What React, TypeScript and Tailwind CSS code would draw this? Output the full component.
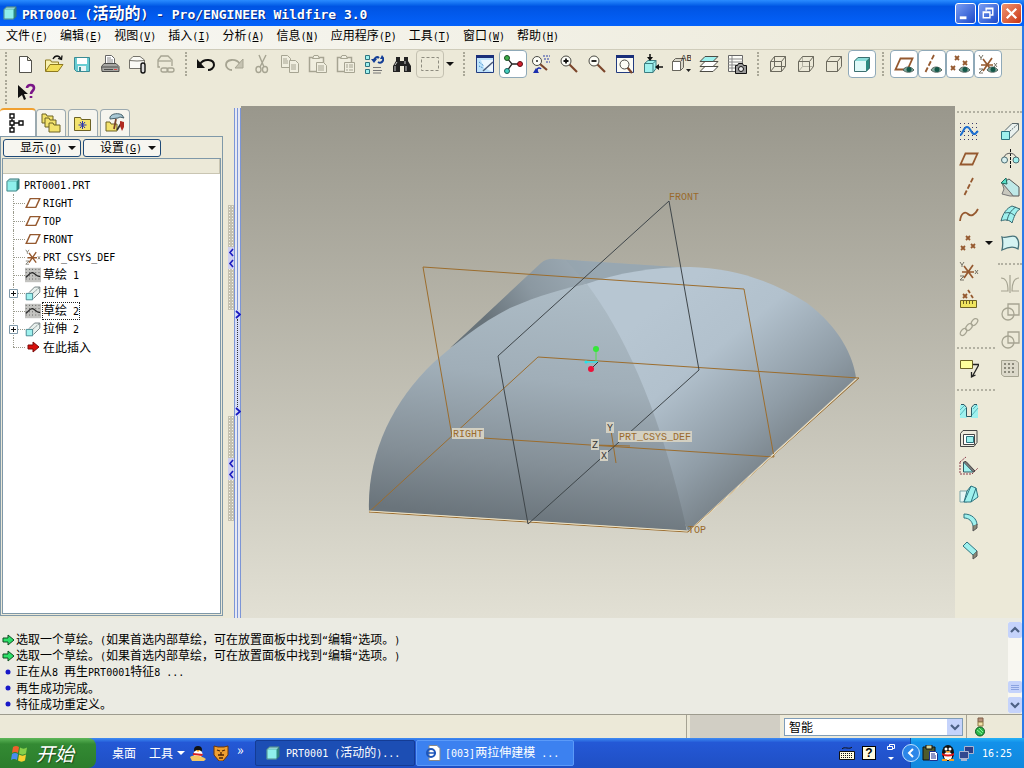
import type { ReactNode } from "react";
import { useState } from "react";

const OR = "#95592f";
const GY = "#a6a492";
const AQ = "#9ff1ee";

/* Splits mixed text so that latin runs take exactly half of a CJK cell */
const Txt = ({ s, big }: { s: string; big?: boolean }) => (
  <span className="whitespace-pre">
    {s.split(/([\x20-\x7e“”]+)/).map((part, i) =>
      /^[\x20-\x7e“”]/.test(part) ? (
        <span
          key={i}
          className={
            big
              ? "font-['DejaVu_Sans_Mono',monospace] text-[13px]"
              : "font-['DejaVu_Sans_Mono',monospace] text-[10px]"
          }
        >
          {part}
        </span>
      ) : (
        part
      ),
    )}
  </span>
);

/* "文件" + "F" => 文件(F) with the access key underlined */
const Hot = ({ label, k }: { label: string; k: string }) => (
  <span className="whitespace-pre">
    {label}
    <span className="font-['DejaVu_Sans_Mono',monospace] text-[10px]">
      (<u className="underline-offset-1">{k}</u>)
    </span>
  </span>
);

const cube = (
  <>
    <path d="M1 5 5 1h14v14l-4 4H1z" fill="#2c8b84" />
    <path d="M1 5 5 1h14l-4 4z" fill="#8fd5d2" />
    <path d="M1 5h14v14H1z" fill="#8ff0ec" />
    <path d="M1.500 5 5 1.500h13.500V15L15 18.500H1.500z" fill="none" stroke="#426b73" />
  </>
);

const wire = (
  <path d="M2.5 7.5h11v10h-11zM2.5 7.5l4-5h11v10l-4 5M13.5 7.5l4-5" />
);

const eye = (
  <>
    <path d="M9 16c2-4 8-4 11 0-3 3-8 3-11 0z" fill="#7fa89c" stroke="#55645e" />
    <circle cx="15" cy="15.500" r="2.500" fill="#15584a" />
  </>
);

const plane = <path d="M6.500 4.500h12l-5 11h-12z" fill="none" stroke={OR} strokeWidth="1.800" />;

const xMark = (x: number, y: number, c = OR) => (
  <path d={`M${x - 2} ${y - 2}l4 4m0-4l-4 4`} stroke={c} strokeWidth="1.800" fill="none" />
);

const csys = (
  <g fill="none">
    <path d="M3 11h12M5 5l9 12M14 4 5 17" stroke={OR} strokeWidth="1.700" />
    <path d="M1 1l2 3 2-3M3 4v2M16 9l3 4m0-4-3 4M1 15h4l-4 4h4" stroke="#747164" />
  </g>
);

const lens = (x: number, y: number) => (
  <>
    <path d={`M${x + 3} ${y + 3}l8 8`} stroke="#7b452b" strokeWidth="2.200" />
    <circle cx={x} cy={y} r="5" fill="#fdfdf6" stroke="#4a4a44" />
  </>
);

const folder = (x: number, y: number) => (
  <path d={`M${x} ${y}h4l1 2h6v7H${x}z`} fill="#f3e36d" stroke="#6d6224" />
);

const icons: Record<string, ReactNode> = {
  cube,
  create: <path d="M3.500 2.500h8l4 4v12h-12zM11.500 2.500v4h4" fill="#fff" stroke="#54534c" />,
  open: (
    <>
      <path d="M1.500 17V6h5l1 2h7v3" fill="#f8f1b0" stroke="#8e7a20" />
      <path d="M1.500 17.500 6 10.500h13l-5 7z" fill="#f1dd58" stroke="#8e7a20" />
      <path d="M9 5c2-4 6-4 8 0M14 4.500l3.500 1 .5-4" fill="none" stroke="#111" strokeWidth="1.300" />
    </>
  ),
  save: (
    <>
      <path d="M2.500 3.500h15v14h-13l-2-2z" fill="#69cdd3" stroke="#3b8b94" />
      <path d="M5 4h10v6H5z" fill="#fff" />
      <path d="M6 12h8v5H6z" fill="#e9f5f5" />
      <path d="M7 13h2v4H7z" fill="#3b8b94" />
    </>
  ),
  print: (
    <>
      <path d="M5.500 10V1.500h6l3 3V10z" fill="#fff" stroke="#666" />
      <path d="M7 4h4M7 6h6M7 8h6" stroke="#888" />
      <path d="M1.500 12.500 4 9.500h12l3 3v5h-17z" fill="#a6a6a2" stroke="#4d4d4a" />
      <path d="M2 13h16M4 15.500h9" stroke="#4d4d4a" />
      <path d="M14 15h3v1h-3z" fill="#d44" />
    </>
  ),
  mail: (
    <>
      <path d="M1.500 14.500V6L5 2.500h7L16.500 6v8.500z" fill="#fafaf5" stroke="#74726a" />
      <path d="M1.500 6.500 9 7l7.500-.5" fill="none" stroke="#74726a" />
      <rect x="13" y="9" width="4" height="10" rx="2" fill="#ddd" stroke="#111" strokeWidth="1.400" />
    </>
  ),
  weblink: (
    <g fill="none" stroke={GY} strokeWidth="1.300">
      <path d="M4 13H2V6l3-4h7l4 4v6" />
      <path d="M2 7h13" />
      <rect x="5" y="14" width="7" height="4" rx="2" />
      <rect x="11" y="14" width="7" height="4" rx="2" />
    </g>
  ),
  undo: (
    <>
      <path d="M4 10c4-6 14-5 14 1 0 3-3 5-6 5" fill="none" stroke="#111" strokeWidth="2" />
      <path d="M1 5v9h8z" fill="#111" />
    </>
  ),
  redo: (
    <>
      <path d="M16 10C12 4 2 5 2 11c0 3 3 5 6 5" fill="none" stroke={GY} strokeWidth="1.800" />
      <path d="M19 5v9h-8z" fill="#c6c3b2" stroke={GY} />
    </>
  ),
  cut: (
    <g fill="none" stroke={GY} strokeWidth="1.400">
      <path d="M7 1l5 12M14 1 8 13" />
      <ellipse cx="6.500" cy="15.500" rx="2.500" ry="3" />
      <ellipse cx="13" cy="15.500" rx="2.500" ry="3" />
    </g>
  ),
  copy: (
    <g fill="#f0eedf" stroke={GY}>
      <path d="M1.500 1.500h6l3 3v9h-9zM3 5h4M3 7h5M3 9h5" />
      <path d="M9.500 6.500h6l3 3v9h-9zM11 11h5M11 13h5M11 15h5" />
    </g>
  ),
  paste: (
    <g fill="#f0eedf" stroke={GY}>
      <path d="M1.500 3.500h14v14h-14z" strokeWidth="1.500" />
      <path d="M4.500 4.500 6 1.500h4l1.500 3z" />
      <path d="M8.500 8.500h7l3 3v7h-10zM10 12h6M10 14h6M10 16h6" />
    </g>
  ),
  pasteSpecial: (
    <g fill="#f0eedf" stroke={GY}>
      <path d="M1.500 3.500h14v14h-14z" strokeWidth="1.500" />
      <path d="M4.500 4.500 6 1.500h4l1.500 3z" />
      <path d="M8.500 8.500h10v10h-10zM10 11h2M13 11h4M10 13h2M13 13h4M10 16h2M13 16h4" />
    </g>
  ),
  regen: (
    <>
      <g fill={AQ} stroke="#2e7480">
        <path d="M1.500 1.500h4v4h-4zM1.500 8.500h4v4h-4zM1.500 15.500h4v4h-4z" />
      </g>
      <path d="M10 7c0-3 3-5 5-3M19 4c1 3-2 6-5 4" fill="none" stroke="#143e96" strokeWidth="2" />
      <path d="M7 5h6l-3 4zM16 5h5l-3-4z" fill="#143e96" />
      <path d="M9 13.500h8M9 16.500h9M9 19h8" stroke="#777" />
    </>
  ),
  find: (
    <>
      <path d="M4 3h4v4h4V3h4v4l3 5v6h-7v-6H8v6H1v-6l3-5z" fill="#222" />
      <path d="M3 12v5M5 8l-2 3M14 12v5M13 7v3" stroke="#c9c9c9" />
    </>
  ),
  marquee: (
    <path d="M1.500 3.500h17v13h-17z" fill="none" stroke="#8d8b7f" strokeDasharray="3 2" />
  ),
  repaint: (
    <>
      <path d="M1.500 2.500h17v16h-17z" fill="#bfe3fb" stroke="#223b80" />
      <path d="M1 1h18v3H1z" fill="#1a2f7a" />
      <path d="M6 6h12v12L9 14z" fill="#eef8ff" />
      <path d="M18 8 8 17" stroke="#4d5b78" strokeWidth="1.500" />
      <path d="M4 8l5 4M4 12l4 2" stroke="#2b7fc0" strokeDasharray="1 1" />
    </>
  ),
  spin: (
    <>
      <path d="M4 4l5 6-5 7M9 10h8" fill="none" stroke="#222" strokeWidth="1.300" />
      <circle cx="4" cy="4" r="2.500" fill="#3fae4a" stroke="#1b4d22" />
      <circle cx="4" cy="17" r="2.500" fill="#46d0c0" stroke="#1b5d58" />
      <circle cx="17" cy="10" r="2.500" fill="#d3202e" stroke="#5c0d14" />
    </>
  ),
  orient: (
    <>
      <path d="M9 10l7 6" stroke="#7b452b" strokeWidth="2.200" />
      <circle cx="6" cy="7" r="4.500" fill="#fdfdf6" stroke="#4a4a44" />
      <circle cx="6" cy="7" r="1" fill="#222" />
      <path d="M12 2h7M13 5h6M15 8h4" stroke="#2b3fa8" strokeDasharray="2 1" />
      <path d="M6 19v-3c0-2 3-3 4-1" fill="none" stroke="#1b2fae" strokeWidth="1.500" />
      <path d="M5 14l-3 5h6z" fill="#1b2fae" />
    </>
  ),
  zoomIn: (
    <>
      {lens(7, 7)}
      <path d="M4.500 7h5M7 4.500v5" stroke="#111" strokeWidth="1.800" />
    </>
  ),
  zoomOut: (
    <>
      {lens(7, 7)}
      <path d="M4.500 7h5" stroke="#111" strokeWidth="1.800" />
    </>
  ),
  refit: (
    <>
      <path d="M1.500 2.500h17v16h-17z" fill="#fbfbf4" stroke="#223b80" />
      <path d="M1 1h18v3H1z" fill="#1a2f7a" />
      <path d="M12 13l5 6" stroke="#7b452b" strokeWidth="2.200" />
      <circle cx="9.500" cy="10.500" r="4.500" fill="#fdfdf6" stroke="#4a4a44" />
    </>
  ),
  reorient: (
    <>
      <path d="M1.500 9.500 5 6.500h8v8l-3 4H1.500z" fill={AQ} stroke="#3c7c80" />
      <path d="M1.500 9.500H10v9M10 9.500l3-3" fill="none" stroke="#3c7c80" />
      <path d="M7 0v5M20 13h-5" stroke="#111" strokeWidth="1.500" />
      <path d="M4 3h6L7 7zM16 10v6l-4-3z" fill="#111" />
    </>
  ),
  views: (
    <>
      <path d="M1.500 7.500l3-3h8v9l-3 3h-8z" fill="#d9d7ca" stroke="#67655c" />
      <path d="M1.500 7.500h8v9h-8z" fill="#fff" stroke="#67655c" />
      <text x="10" y="7" fontSize="9" fontFamily="Liberation Mono, monospace" fill="#222">AB</text>
      <path d="M15 15h5l-2.500 3z" fill="#222" />
    </>
  ),
  layers: (
    <g stroke="#4c4b44">
      <path d="M1 17.500 6 12.500h13l-5 5z" fill="#fff" />
      <path d="M1 12.500 6 7.500h13l-5 5z" fill="#fff" />
      <path d="M1 7.500 6 2.500h13l-5 5z" fill={AQ} />
    </g>
  ),
  viewMgr: (
    <>
      <path d="M1.500 1.500h14v16h-14z" fill="#fdfdf8" stroke="#666" />
      <path d="M1 5h15M1 8h15M1 11h15M1 14h15M5 2v15" stroke="#888" />
      <path d="M8.500 11.500h2l1-2h4l1 2h3v8h-11z" fill="#999" stroke="#111" />
      <circle cx="14" cy="15" r="2.500" fill="#eee" stroke="#111" />
    </>
  ),
  wireframe: (
    <g fill="none" stroke="#6b695d">
      {wire}
      <path d="M6.500 2.500v10h11M6.500 12.500l-4 5" />
    </g>
  ),
  hidden: (
    <>
      <path d="M6.500 2.500v10h11M6.500 12.500l-4 5" fill="none" stroke="#b3b1a2" />
      <g fill="none" stroke="#6b695d">{wire}</g>
    </>
  ),
  noHidden: <g fill="none" stroke="#6b695d">{wire}</g>,
  shaded: (
    <>
      <path d="M2 7l4-4h12l-4 4z" fill="#8adcd9" />
      <path d="M2 7h12v11H2z" fill="#dff9f8" />
      <path d="M14 7l4-4v11l-4 4z" fill="#2b8a80" />
      <path d="M2.500 7 6 3.500h11.500V14L14 17.500H2.500z" fill="none" stroke="#3d6f70" />
    </>
  ),
  dPlane: <>{plane}{eye}</>,
  dAxis: (
    <>
      <path d="M12 1 3 19" stroke={OR} strokeWidth="1.800" strokeDasharray="5 2" />
      {eye}
    </>
  ),
  dPoint: <>{xMark(7, 4)}{xMark(15, 9)}{xMark(3, 14)}{eye}</>,
  dCsys: <>{csys}{eye}</>,
  help: (
    <>
      <path d="M2 3v13l4-3 2 5 2-1-2-5h4z" fill="#111" />
      <path d="M11 6c0-4 7-4 7 0 0 3-3 3-3 6M15 14v2" fill="none" stroke="#7a1688" strokeWidth="2.600" />
    </>
  ),
  tabTree: (
    <g fill="#fff" stroke="#111" strokeWidth="1.400">
      <path d="M4 6v9M6 10h6" />
      <path d="M2 1h4v4H2zM2 8h4v4H2zM2 15h4v4H2zM11 8h4v4h-4z" />
    </g>
  ),
  tabFolders: <>{folder(1, 1)}{folder(4, 5)}{folder(8, 10)}</>,
  tabFav: (
    <>
      <path d="M1.500 4.500h6l1 2h9v11h-16z" fill="#f3e36d" stroke="#6d6224" />
      <path d="M9.500 8v8M5.500 12h8M7 9l5 6M12 9l-5 6" stroke="#2a37b0" />
    </>
  ),
  tabTools: (
    <>
      {folder(1, 9)}
      <path d="M5 4c2-4 9-4 12-2l2 3-4-1-2 1-8 1z" fill="#a9c8d4" stroke="#46606a" />
      <path d="M11 6 9 16" stroke="#7b452b" strokeWidth="1.800" />
      <path d="M12 17l5-8" stroke="#333" strokeWidth="1.800" />
      <path d="M15 8l4 1v5l-2 4-2-5z" fill="#b02a20" />
    </>
  ),
  plane,
  csys,
  sketchRow: (
    <>
      <path d="M0 1h20v18H0z" fill="#c3c3c0" />
      <path d="M1 3h18M1 7h18M1 11h18M1 15h18" stroke="#333" strokeDasharray="1 3" />
      <path d="M1 13c3-1 4-6 8-6s4 5 10 5" fill="none" stroke="#222" strokeWidth="1.500" />
    </>
  ),
  extrude: (
    <>
      <path d="M5 9.500 12 2.500h6.500V9l-8 8" fill="#e9f1ee" stroke="#59676a" />
      <path d="M1.500 10.500h8v8h-8z" fill={AQ} stroke="#2e7480" />
      <path d="M9.500 10.500 18 3" stroke="#59676a" strokeDasharray="2 1" />
    </>
  ),
  sketch: (
    <>
      <g stroke="#3a3a6a" strokeDasharray="1 3">
        <path d="M1 2.500h18M1 6.500h18M1 10.500h18M1 14.500h18M1 18.500h18" />
      </g>
      <path d="M1 14C4 14 4 6 8 6s4 8 8 7l3-3" fill="none" stroke="#1d6fd0" strokeWidth="2" />
    </>
  ),
  axis: <path d="M14 1 5 19" stroke={OR} strokeWidth="1.800" strokeDasharray="5 2" />,
  curve: <path d="M1 16C2 8 6 6 9 9s7 1 10-5" fill="none" stroke={OR} strokeWidth="1.800" />,
  points: <>{xMark(9, 5)}{xMark(4, 15)}{xMark(14, 13)}</>,
  refs: (
    <>
      {xMark(6, 7)}
      <path d="M9 1l2 3M12 6l2 3" stroke={OR} strokeWidth="1.800" />
      <path d="M1.500 11.500h16v7h-16z" fill="#efe45e" stroke="#6d6224" />
      <path d="M4.500 12v3M7.500 12v3M10.500 12v3M13.500 12v3" stroke="#6d6224" />
    </>
  ),
  chain: (
    <g fill="none" stroke={GY} strokeWidth="1.300">
      <ellipse cx="4.500" cy="15" rx="2.500" ry="4" transform="rotate(40 4.500 15)" />
      <ellipse cx="10" cy="10" rx="2.500" ry="4" transform="rotate(40 10 10)" />
      <ellipse cx="15.500" cy="5" rx="2.500" ry="4" transform="rotate(40 15.500 5)" />
    </g>
  ),
  annot: (
    <>
      <path d="M1.500 1.500h12v8h-12z" fill="#ffff9c" stroke="#6d6224" />
      <path d="M14 5.500h6L13 18M12.500 13v5l4-2" fill="none" stroke="#222" strokeWidth="1.300" />
    </>
  ),
  hole: (
    <>
      <path d="M1 5h4l3 4v9H1zM19 5h-4l-3 4v9h7z" fill={AQ} />
      <path d="M1 10l5-5M1 15l6-7M13 15l6-7M14 9l4-4" stroke="#5ab8bd" />
      <path d="M2 4.500h3l2.500 3v9h5v-9l2.500-3h3" fill="none" stroke="#2c5a66" />
    </>
  ),
  shell: (
    <g stroke="#444">
      <path d="M1.500 5.500 4 2.500h14v12l-3 4H1.500z" fill="#eeeadd" />
      <path d="M4.500 6.500h11v10h-11z" fill="#fff" />
      <path d="M7.500 8.500h7v6h-7z" fill={AQ} stroke="#2e7480" />
    </g>
  ),
  rib: (
    <>
      <path d="M1 6l6-5M1 6v12h12l6-6" fill="none" stroke="#8b3a4a" strokeDasharray="2 1" />
      <path d="M4.500 6v10H14z" fill={AQ} stroke="#2c5a66" />
      <path d="M4.500 6 7 5.500 16 15l-2 1" fill="#777" stroke="#444" />
    </>
  ),
  draft: (
    <>
      <path d="M1 7h7v11H1z" fill="#e6f6f5" stroke="#7aa3a8" />
      <path d="M8 7l4-5 5 2 2 9-7 5H5z" fill={AQ} stroke="#2e7480" />
      <path d="M5 18 12 2M12 18l5-14" fill="none" stroke="#2e7480" />
    </>
  ),
  round: (
    <>
      <path d="M5 2c8 0 13 5 13 11l-4 1C13 9 10 6 5 6z" fill={AQ} stroke="#2e7480" />
      <path d="M14 14v5l4-3v-4" fill="#8a8877" stroke="#555" />
    </>
  ),
  chamfer: (
    <>
      <path d="M4 6l4-4 10 9-4 4z" fill={AQ} stroke="#2e7480" />
      <path d="M14 15v4l4-3v-5" fill="#8a8877" stroke="#555" />
    </>
  ),
  revolve: (
    <>
      <path d="M10.500 0v20" stroke="#111" strokeDasharray="3 1" />
      <path d="M4 8c2-5 10-5 12 0" fill="none" stroke="#555" />
      <circle cx="4.500" cy="11" r="3" fill="#d6eeee" stroke="#4a6a70" />
      <circle cx="16" cy="11" r="3" fill={AQ} stroke="#4a6a70" />
    </>
  ),
  sweep: (
    <>
      <path d="M2 6l7-4 10 8v9h-6z" fill="#bfe9e8" stroke="#555" />
      <path d="M2 6l8 9 3 4h-3l-8-2 2-5z" fill="#c9c8be" stroke="#777" />
      <path d="M1 6l5-5 1 6z" fill="#57e0c8" stroke="#1d6b60" />
    </>
  ),
  boundary: (
    <>
      <path d="M1 16C3 8 7 3 12 1l8 3c-4 2-6 8-8 14-2-3-7-4-11-2z" fill={AQ} stroke="#38686f" />
      <path d="M5 8c4-1 7 0 10 3M7 16c1-6 4-11 9-14" fill="none" stroke="#38686f" />
    </>
  ),
  style: (
    <path d="M2 4c5 2 10-3 14 0 3 3 3 8 2 12-4-3-10-2-16 1 1-5 1-9 0-13z" fill="#d5f3f2" stroke="#47727a" strokeWidth="1.300" />
  ),
  mirror: (
    <g fill="none" stroke={GY} strokeWidth="1.200">
      <path d="M10 1v18M1 4c5 0 7 4 7 13H1M19 4c-5 0-7 4-7 13h7" />
    </g>
  ),
  merge: (
    <g fill="none" stroke={GY} strokeWidth="1.300">
      <circle cx="8" cy="12" r="6" />
      <path d="M8 2h11v11H8z" />
    </g>
  ),
  pattern: (
    <>
      <path d="M1.500 2.500h14l3 2v14H4l-2.500-2z" fill="#dcd9ca" stroke={GY} />
      <path d="M4 6h11M4 10h11M4 14h11" stroke="#8b897b" strokeWidth="2" strokeDasharray="2 2" />
    </>
  ),
};

const Icon = ({ name, size = "size-5" }: { name: string; size?: string }) => (
  <svg viewBox="0 0 20 20" className={`${size} shrink-0`} aria-hidden="true">
    {icons[name]}
  </svg>
);

interface Tool {
  n: string;
  on?: boolean;
}

const fileTools: Tool[] = ["create", "open", "save", "print", "mail", "weblink"].map((n) => ({ n }));
const editTools: Tool[] = ["undo", "redo", "cut", "copy", "paste", "pasteSpecial", "regen", "find"].map((n) => ({ n }));
const viewTools: Tool[] = [
  { n: "repaint" }, { n: "spin", on: true }, { n: "orient" }, { n: "zoomIn" }, { n: "zoomOut" },
  { n: "refit" }, { n: "reorient" }, { n: "views" }, { n: "layers" }, { n: "viewMgr" },
];
const modelTools: Tool[] = [{ n: "wireframe" }, { n: "hidden" }, { n: "noHidden" }, { n: "shaded", on: true }];
const datumTools: Tool[] = ["dPlane", "dAxis", "dPoint", "dCsys"].map((n) => ({ n, on: true }));

const ToolGroup = ({ tools }: { tools: Tool[] }) => (
  <div className="flex">
    {tools.map((t) => (
      <button
        key={t.n}
        aria-label={t.n}
        className={
          t.on
            ? "flex h-7 w-7 items-center justify-center rounded border border-[#8fa9b8] bg-white"
            : "flex h-7 w-7 items-center justify-center"
        }
      >
        <Icon name={t.n} />
      </button>
    ))}
  </div>
);

const Grip = ({ w }: { w: string }) => (
  <div className={`flex h-7 shrink-0 items-center justify-center ${w}`}>
    <div className="h-6 w-0 border-l-2 border-dotted border-[#aaa898]" />
  </div>
);

const Dots = ({ h }: { h: string }) => (
  <div className={`flex items-center ${h}`}>
    <div className="h-0 w-full border-t-2 border-dotted border-[#b3b1a2]" />
  </div>
);

const menus = [
  ["文件", "F"], ["编辑", "E"], ["视图", "V"], ["插入", "I"], ["分析", "A"],
  ["信息", "N"], ["应用程序", "P"], ["工具", "T"], ["窗口", "W"], ["帮助", "H"],
];

const treeItems = [
  { icon: "plane", label: "RIGHT" },
  { icon: "plane", label: "TOP" },
  { icon: "plane", label: "FRONT" },
  { icon: "csys", label: "PRT_CSYS_DEF" },
  { icon: "sketchRow", label: "草绘 1" },
  { icon: "extrude", label: "拉伸 1", plus: true },
  { icon: "sketchRow", label: "草绘 2", focus: true },
  { icon: "extrude", label: "拉伸 2", plus: true },
  { icon: "insert", label: "在此插入" },
];

const messages = [
  { arrow: true, text: "选取一个草绘。(如果首选内部草绘，可在放置面板中找到“编辑“选项。)" },
  { arrow: true, text: "选取一个草绘。(如果首选内部草绘，可在放置面板中找到“编辑“选项。)" },
  { arrow: false, text: "正在从8 再生PRT0001特征8 ..." },
  { arrow: false, text: "再生成功完成。" },
  { arrow: false, text: "特征成功重定义。" },
];

const Down = ({ c = "#111" }: { c?: string }) => (
  <svg viewBox="0 0 8 4" className="h-1 w-2" aria-hidden="true">
    <path d="M0 0h8L4 4z" fill={c} />
  </svg>
);

const Chevron = ({ up }: { up?: boolean }) => (
  <svg viewBox="0 0 10 10" className="size-2.5" aria-hidden="true">
    <path d={up ? "M1 7l4-4 4 4" : "M1 3l4 4 4-4"} fill="none" stroke="#4d6185" strokeWidth="2.200" />
  </svg>
);

const TitleBar = () => (
  <header className="flex h-[26px] items-center bg-linear-to-b from-[#2a8cff] via-[#0054e3] via-25% to-[#0462fb] pl-[3px] pr-[2px]">
    <Icon name="cube" size="size-3.5" />
    <h1 className="ml-[5px] flex-1 text-[16px] font-bold leading-5 text-white [text-shadow:1px_1px_0_#0a2a80]">
      <Txt s="PRT0001 (活动的) - Pro/ENGINEER Wildfire 3.0" big />
    </h1>
    <div className="flex gap-[2px]">
      <button aria-label="最小化" className="size-[21px] rounded-[3px] border border-white bg-linear-to-br from-[#7b9df2] to-[#1c46c8]">
        <svg viewBox="0 0 20 20"><path d="M4 13h7v3H4z" fill="#fff" /></svg>
      </button>
      <button aria-label="还原" className="size-[21px] rounded-[3px] border border-white bg-linear-to-br from-[#7b9df2] to-[#1c46c8]">
        <svg viewBox="0 0 20 20" fill="none" stroke="#fff">
          <path d="M7.500 7V4.500h7v7H12M7 5h8" strokeWidth="1.500" />
          <path d="M4.500 8.500h7v6h-7zM4 9h8" strokeWidth="1.500" />
        </svg>
      </button>
      <button aria-label="关闭" className="size-[21px] rounded-[3px] border border-white bg-linear-to-br from-[#f0936f] to-[#c8320c]">
        <svg viewBox="0 0 20 20"><path d="M5 5l10 10M15 5 5 15" stroke="#fff" strokeWidth="2.400" /></svg>
      </button>
    </div>
  </header>
);

const ModelTree = () => (
  <aside className="flex w-[223px] shrink-0 flex-col pb-[2px] pt-[2px]">
    <div className="flex items-end">
      <button aria-label="模型树" className="flex h-7 w-9 items-center justify-center rounded-t border-t-2 border-r border-t-[#f0a030] border-r-[#9caab0] bg-white">
        <Icon name="tabTree" />
      </button>
      {["tabFolders", "tabFav", "tabTools"].map((t) => (
        <button key={t} aria-label={t} className="mr-[2px] flex h-[27px] w-[30px] items-center justify-center rounded-t border border-b-0 border-[#9caab0] bg-[#f6f5ee]">
          <Icon name={t} />
        </button>
      ))}
    </div>
    <div className="flex flex-1 flex-col border border-[#7f98a8] bg-[#ece9d8] p-px">
      <div className="flex gap-[2px] px-px pt-px">
        <button className="flex h-[18px] w-[78px] items-center justify-center gap-1.5 rounded-[3px] border border-[#1f4a78] bg-[#f7f6f0] pl-3">
          <Hot label="显示" k="O" />
          <Down />
        </button>
        <button className="flex h-[18px] w-[78px] items-center justify-center gap-1.5 rounded-[3px] border border-[#1f4a78] bg-[#f7f6f0] pl-3">
          <Hot label="设置" k="G" />
          <Down />
        </button>
      </div>
      <div className="mt-px flex flex-1 flex-col border border-[#7f98a8] bg-white">
        <div className="h-[15px] border-b border-r border-[#c9c5b2] bg-[#ece9d8]" />
        <div className="mt-0.5 flex h-[18px] items-center gap-1 pl-[3px]">
          <Icon name="cube" size="size-3.5" />
          <Txt s="PRT0001.PRT" />
        </div>
        <ul className="pl-1">
          {treeItems.map((it, i) => (
            <li key={i} className="flex h-[18px] items-center">
              <span className="relative flex h-full w-[18px] items-center">
                <span className={`absolute left-[6px] top-0 w-0 border-l border-dotted border-[#9a9a8c] ${i === treeItems.length - 1 ? "h-1/2" : "h-full"}`} />
                <span className="absolute left-[6px] right-0 h-0 border-t border-dotted border-[#9a9a8c]" />
                {it.plus && (
                  <svg viewBox="0 0 9 9" className="relative ml-[2px] size-[9px]" aria-hidden="true">
                    <path d="M.5.5h8v8h-8z" fill="#fff" stroke="#7f98a8" />
                    <path d="M2 4.500h5M4.500 2v5" stroke="#111" />
                  </svg>
                )}
              </span>
              {it.icon === "insert" ? (
                <svg viewBox="0 0 16 16" className="size-4" aria-hidden="true">
                  <path d="M3 6h5V3l6 5-6 5v-3H3z" fill="#d8100c" stroke="#7a0a08" />
                </svg>
              ) : (
                <Icon name={it.icon} size="size-4" />
              )}
              <span className={it.focus ? "ml-[2px] leading-[14px] outline outline-dotted outline-[#222]" : "ml-[2px] leading-[14px]"}>
                <Txt s={it.label} />
              </span>
            </li>
          ))}
        </ul>
      </div>
    </div>
  </aside>
);

const SashTexture = () => (
  <div className="flex h-[105px] w-[6px] flex-col items-center justify-center bg-[#c4c1b0] bg-[radial-gradient(#f4f2e8_1px,transparent_1px)] bg-size-[3px_3px]">
    <svg viewBox="0 0 6 22" className="h-[22px] w-[6px] bg-[#cfd0f0]" aria-hidden="true">
      <path d="M5 2 2 5.500 5 9M5 13l-3 3.500L5 20" fill="none" stroke="#1a1ac0" strokeWidth="1.600" />
    </svg>
  </div>
);

const SashArrow = () => (
  <svg viewBox="0 0 6 9" className="h-[9px] w-[6px] shrink-0" aria-hidden="true">
    <path d="M1 1l4 3.500L1 8" fill="none" stroke="#1a1ac0" strokeWidth="1.800" />
  </svg>
);

const Sash = () => (
  <div className="flex w-[18px] shrink-0 pt-0.5">
    <div className="flex flex-1 flex-col items-center justify-center gap-[106px] pl-1">
      <SashTexture />
      <SashTexture />
    </div>
    <div className="flex w-[7px] flex-col border-x border-[#7c95d6] bg-[#e6e8f2]">
      <div className="mx-auto w-px flex-1 bg-[#7c95d6]" />
      <div className="flex h-[106px] flex-col items-center justify-between bg-[#d5dbf6]">
        <SashArrow />
        <span className="w-0 flex-1 border-l border-dotted border-[#333]" />
        <SashArrow />
      </div>
      <div className="mx-auto w-px flex-1 bg-[#7c95d6]" />
    </div>
  </div>
);

const Tag = ({ x, y, w, t, c = "#9a6a2c", bg = true }: { x: number; y: number; w: number; t: string; c?: string; bg?: boolean }) => (
  <g>
    {bg && <rect x={x - 1} y={y - 9} width={w} height="11" fill="#d3d0c2" />}
    <text x={x} y={y} fontSize="10" fontFamily="'Liberation Mono', monospace" fill={c}>{t}</text>
  </g>
);

/* Model space is drawn in screen coordinates of the graphics window */
const Viewport = () => (
  <main className="min-w-0 flex-1 bg-linear-to-b from-[#99978c] to-[#e2e0d4]">
    <svg viewBox="241 106 714 512" preserveAspectRatio="xMidYMid meet" className="h-full w-full">
      <defs>
        <linearGradient id="front" gradientUnits="userSpaceOnUse" x1="560" y1="285" x2="530" y2="525">
          <stop offset="0" stopColor="#adbcc6" />
          <stop offset=".4" stopColor="#a0aeb8" />
          <stop offset=".75" stopColor="#848f97" />
          <stop offset="1" stopColor="#6a747b" />
        </linearGradient>
        <linearGradient id="side" gradientUnits="userSpaceOnUse" x1="665" y1="300" x2="790" y2="455">
          <stop offset="0" stopColor="#b7c6d2" />
          <stop offset=".35" stopColor="#b2c1cd" />
          <stop offset=".75" stopColor="#909da7" />
          <stop offset="1" stopColor="#788289" />
        </linearGradient>
        <linearGradient id="back" gradientUnits="userSpaceOnUse" x1="590" y1="262" x2="490" y2="325">
          <stop offset="0" stopColor="#9eacb6" />
          <stop offset=".55" stopColor="#8b98a1" />
          <stop offset="1" stopColor="#68737a" />
        </linearGradient>
      </defs>
      <path d="M450 348 541 263Q547 258 556 259L690 268 640 273 587 284 540 297 493 320z" fill="url(#back)" />
      <path d="M566 260 690 268Q630 270 587 284z" fill="#95a3ad" opacity=".6" />
      <path d="M583 285C620 272 655 267 690 267 732 268 768 279 807 303 840 328 853 356 856 378L688 531z" fill="url(#side)" />
      <path d="M369 511C367 455 392 402 433 363 455 344 480 323 510 308 540 295 565 288 587 284 625 335 660 410 687 531z" fill="url(#front)" />
      <g fill="none" stroke="#9c6d2d">
        <path d="M423 267 744 289 774 457 452 436z" />
        <path d="M369 512 538 357 859 378 688 532z" />
        <path d="M610 424l6 39M594 445l36 1" />
      </g>
      <path d="M369 511 687 531M691 530 856 379" stroke="#efe3c4" fill="none" />
      <path d="M669 201 699 370 528 524 498 356z" fill="none" stroke="#3f464a" />
      <path d="M596 349v12" stroke="#4ee04a" />
      <path d="M585 362h13" stroke="#31e0e6" strokeWidth="1.500" />
      <path d="M598 362l-6 6" stroke="#333" />
      <circle cx="596" cy="349" r="3" fill="#35e83a" />
      <circle cx="591" cy="369" r="3" fill="#ee1038" />
      <circle cx="586" cy="362" r="1.500" fill="#22e4ea" />
      <Tag x={669} y={200} w={32} t="FRONT" bg={false} />
      <Tag x={453} y={437} w={32} t="RIGHT" />
      <Tag x={619} y={440} w={74} t="PRT_CSYS_DEF" />
      <Tag x={688} y={533} w={20} t="TOP" bg={false} />
      <Tag x={607} y={431} w={8} t="Y" c="#333" />
      <Tag x={592} y={448} w={8} t="Z" c="#333" />
      <Tag x={601} y={459} w={8} t="X" c="#333" />
    </svg>
  </main>
);

const SideButton = ({ n }: { n: string }) => (
  <button aria-label={n} className="flex h-7 w-6 items-center justify-center">
    <Icon name={n} />
  </button>
);

const SideTools = () => (
  <nav aria-label="特征" className="flex w-[67px] shrink-0 gap-[3px] overflow-hidden pl-[2px]">
    <div className="w-[38px] shrink-0">
      <Dots h="h-[11px]" />
      {["sketch", "plane", "axis", "curve", "points", "csys", "refs", "chain"].map((n) => (
        <div key={n} className="flex items-center gap-1">
          <SideButton n={n} />
          {n === "points" && <Down />}
        </div>
      ))}
      <Dots h="h-[14px]" />
      <SideButton n="annot" />
      <Dots h="h-[13px]" />
      {["hole", "shell", "rib", "draft", "round", "chamfer"].map((n) => (
        <SideButton key={n} n={n} />
      ))}
    </div>
    <div className="w-6 shrink-0">
      <Dots h="h-[11px]" />
      {["extrude", "revolve", "sweep", "boundary", "style"].map((n) => (
        <SideButton key={n} n={n} />
      ))}
      <Dots h="h-[13px]" />
      <SideButton n="mirror" />
      <SideButton n="merge" />
      <SideButton n="merge" />
      <SideButton n="pattern" />
    </div>
  </nav>
);

const Messages = () => (
  <section className="flex h-24 shrink-0 bg-[#ebebe3]">
    <ul className="flex-1 pl-[2px] pt-3.5">
      {messages.map((m, i) => (
        <li key={i} className="flex h-4 items-center">
          <svg viewBox="0 0 14 16" className="h-4 w-3.5 shrink-0" aria-hidden="true">
            {m.arrow ? (
              <path d="M1 6h5V3l6 5-6 5v-3H1z" fill="#2ee06a" stroke="#0c4f20" />
            ) : (
              <circle cx="6" cy="8" r="2.500" fill="#1818c8" />
            )}
          </svg>
          <Txt s={m.text} />
        </li>
      ))}
    </ul>
    <div className="mb-px mt-1 flex w-3.5 flex-col bg-[#f8f7f1]">
      <button aria-label="上滚" className="flex h-4 items-center justify-center rounded-xs bg-[#c5d3fb]"><Chevron up /></button>
      <div className="flex-1" />
      <div className="flex h-3 flex-col items-center justify-center gap-px rounded-xs bg-[#c5d3fb]">
        <span className="h-px w-2 bg-[#8ba3e0]" />
        <span className="h-px w-2 bg-[#8ba3e0]" />
        <span className="h-px w-2 bg-[#8ba3e0]" />
      </div>
      <button aria-label="下滚" className="mt-1 flex h-4 items-center justify-center rounded-xs bg-[#c5d3fb]"><Chevron /></button>
    </div>
  </section>
);

const StatusBar = () => {
  const [filter, setFilter] = useState("smart");

  return (
    <div className="flex h-6 shrink-0 items-center justify-end border-t border-[#9d9b8e] bg-[#ece9d8]">
      <div className="h-full w-px bg-[#a5a293]" />
      <div className="ml-[3px] h-full w-[90px] bg-[#d1cec4]" />
      <div className="relative ml-1 w-[179px]">
        <select
          aria-label="选取过滤器"
          value={filter}
          onChange={(e) => setFilter(e.target.value)}
          className="block h-[18px] w-full appearance-none border border-[#7f9db9] bg-white pl-1 text-[12px] leading-4"
        >
          <option value="smart">智能</option>
        </select>
        <span className="pointer-events-none absolute inset-y-px right-px flex w-[15px] items-center justify-center bg-[#c5d3fb]"><Chevron /></span>
      </div>
      <div className="ml-[3px] h-full w-px bg-[#a5a293]" />
      <svg viewBox="0 0 12 20" className="ml-[7px] mr-[36px] h-5 w-3" aria-hidden="true">
        <path d="M4 1h5v4H4z" fill="#b89078" stroke="#7c5c48" />
        <path d="M4 5h5v4H4z" fill="#f0e0a8" stroke="#8f7a48" />
        <circle cx="6" cy="14.500" r="4.500" fill="#2fb84a" stroke="#0c5520" />
        <path d="M3 13l5 4M5 11l4 4" stroke="#8ff0a0" />
      </svg>
    </div>
  );
};

const Taskbar = () => (
  <footer className="flex h-[30px] shrink-0 items-center bg-linear-to-b from-[#3f8cf3] via-[#2458d6] via-15% to-[#1f4fc4] text-white">
    <button className="flex h-full w-24 items-center gap-1.5 rounded-r-lg bg-linear-to-b from-[#5eb85a] via-[#338a33] via-20% to-[#2c7d2c] pl-2.5">
      <svg viewBox="0 0 20 20" className="size-5" aria-hidden="true">
        <path d="M3 4c2-1.500 4-1.500 6 0L8 10c-2-1.500-4-1.500-6 0z" fill="#f0602c" />
        <path d="M10 4.500c2 1.500 5 1.500 7 0l-1 6c-2 1.500-5 1.500-7 0z" fill="#86d04a" />
        <path d="M2 11c2-1.500 4-1.500 6 0l-1 6c-2-1.500-4-1.500-6 0z" fill="#4a8cf0" />
        <path d="M9 11.500c2 1.500 5 1.500 7 0l-1 6c-2 1.500-5 1.500-7 0z" fill="#f8d030" />
      </svg>
      <span className="text-[19px] italic leading-6 [text-shadow:1px_1px_1px_#1c4a1c]">开始</span>
    </button>
    <a href="#desktop" className="ml-4">桌面</a>
    <button className="ml-[13px] flex items-center gap-1">工具 <Down c="#fff" /></button>
    <svg viewBox="0 0 16 16" className="ml-[5px] size-4" aria-hidden="true">
      <circle cx="8" cy="5" r="4" fill="#111" />
      <ellipse cx="8" cy="9" rx="4.500" ry="4" fill="#fff" />
      <path d="M6 5h4l-2 2z" fill="#f0a020" />
      <path d="M3 8l10 1-1 2-9-1z" fill="#d82020" />
      <path d="M0 12c5-3 11-1 16 2l-2 2H2z" fill="#f3c764" />
    </svg>
    <svg viewBox="0 0 16 16" className="ml-[7px] size-4" aria-hidden="true">
      <path d="M1 1l4 1h6l4-1v9l-5 6H6l-5-6z" fill="#f0a030" stroke="#6d3408" />
      <path d="M4 5l3 1M12 5 9 6M5 10h6M6 13h4M8 7v3" stroke="#4f2404" strokeWidth="1.300" />
    </svg>
    <span className="ml-2 w-2.5 -translate-y-1 text-[14px] leading-4">»</span>
    <button className="ml-2 flex h-[26px] w-40 items-center gap-1.5 rounded-xs border border-[#143c94] bg-[#1c4eb4] pl-2.5">
      <Icon name="cube" size="size-3.5" />
      <Txt s="PRT0001 (活动的)..." />
    </button>
    <button className="ml-px flex h-[26px] w-[158px] items-center gap-1 rounded-xs border border-[#5b9af8] bg-[#3c81f0] pl-2">
      <svg viewBox="0 0 16 16" className="size-4" aria-hidden="true">
        <path d="M4 .5h8l3 3v12H4z" fill="#fff" stroke="#888" />
        <circle cx="6" cy="8" r="4" fill="none" stroke="#1d55b8" strokeWidth="2" />
        <path d="M3 8h8" stroke="#1d55b8" strokeWidth="1.500" />
      </svg>
      <Txt s="[003]两拉伸建模 ..." />
    </button>
    <div className="flex-1" />
    <svg viewBox="0 0 16 14" className="h-3.5 w-4" aria-hidden="true">
      <path d="M3 3c2-3 8 1 10-2" fill="none" stroke="#111" />
      <path d="M.5 5.500h15v8H.5z" fill="#fffbe0" stroke="#111" />
      <path d="M2 7.500h12M2 9.500h12M2 11.500h12" stroke="#111" strokeDasharray="1 1" />
    </svg>
    <span className="ml-[7px] flex size-3.5 items-center justify-center border border-black bg-[#fffce0] font-['Liberation_Sans',sans-serif] text-[12px] font-bold leading-3 text-black">?</span>
    <svg viewBox="0 0 10 20" className="ml-2.5 h-5 w-2.5" aria-hidden="true">
      <path d="M3.500 3.500v-2h5v4h-2M1.500 3.500h5v3h-5z" fill="none" stroke="#fff" />
      <path d="M2 14h6l-3 3z" fill="#fff" />
    </svg>
    <div className="ml-[14px] flex h-full items-center border-l border-[#0b4fa8] bg-linear-to-b from-[#25b0f6] via-[#1391ea] via-15% to-[#1088dd] pr-3">
      <button aria-label="展开" className="-ml-[9px] flex size-[18px] items-center justify-center rounded-full border border-[#bfe2ff] bg-[#2b86e8]">
        <svg viewBox="0 0 10 10" className="size-2.5"><path d="M7 1 3 5l4 4" fill="none" stroke="#fff" strokeWidth="2" /></svg>
      </button>
      <svg viewBox="0 0 16 16" className="ml-[2px] size-4" aria-hidden="true">
        <path d="M1 2h12v13H1z" fill="#4f5b2c" stroke="#111" />
        <path d="M4 0h6v4H4z" fill="#d8d498" stroke="#111" />
        <path d="M7.500 6.500h6l2 2v7h-8z" fill="#fff" stroke="#1c2f8c" />
        <path d="M9 9h4M9 11h5M9 13h5" stroke="#1c2f8c" />
      </svg>
      <svg viewBox="0 0 16 16" className="ml-[2px] size-4" aria-hidden="true">
        <ellipse cx="8" cy="8" rx="6" ry="8" fill="#111" />
        <ellipse cx="8" cy="11" rx="4" ry="4" fill="#fff" />
        <circle cx="6" cy="4" r="1.500" fill="#fff" />
        <circle cx="10" cy="4" r="1.500" fill="#fff" />
        <path d="M5 6h6L8 8z" fill="#f5a020" />
        <path d="M2 8c4 2 8 2 12 0v2c-4 2-8 2-12 0z" fill="#e01818" />
        <path d="M2 14h5v2H2zM9 14h5v2H9z" fill="#f5a020" />
      </svg>
      <svg viewBox="0 0 16 16" className="ml-[2px] size-4" aria-hidden="true">
        <path d="M6.500 1.500h9v7h-9z" fill="#2b3f88" stroke="#aab4d0" />
        <path d="M1.500 6.500h9v7h-9z" fill="#33488f" stroke="#aab4d0" />
        <path d="M3 15h6" stroke="#aab4d0" strokeWidth="2" />
      </svg>
      <time className="ml-2"><Txt s="16:25" /></time>
    </div>
  </footer>
);

const App = () => {
  return (
    <div className="flex min-h-screen flex-col bg-[#ece9d8] font-['Noto_Sans_CJK_SC',sans-serif] text-[12px] leading-4 text-black [text-spacing-trim:space-all]">
      <TitleBar />
      <div className="flex flex-1 flex-col border-r-2 border-[#2a7be8]">
        <nav className="flex h-6 shrink-0 items-center gap-3 border-b border-[#cfccba] bg-linear-to-r from-[#f8f8f4] to-[#ece9d8] pb-1 pl-1.5">
          {menus.map(([label, k]) => (
            <button key={label} className="leading-4">
              <Hot label={label} k={k} />
            </button>
          ))}
        </nav>
        <div className="flex flex-wrap">
          <Grip w="w-3" />
          <ToolGroup tools={fileTools} />
          <Grip w="w-3" />
          <ToolGroup tools={editTools} />
          <button aria-label="选取框" className="flex h-7 w-7 items-center justify-center rounded border border-[#c4c1b1]">
            <Icon name="marquee" />
          </button>
          <button aria-label="选取选项" className="flex w-3 items-center justify-center"><Down /></button>
          <Grip w="w-[15px]" />
          <ToolGroup tools={viewTools} />
          <Grip w="w-[13px]" />
          <ToolGroup tools={modelTools} />
          <Grip w="w-[14px]" />
          <ToolGroup tools={datumTools} />
        </div>
        <div className="flex h-7 shrink-0">
          <Grip w="w-3" />
          <ToolGroup tools={[{ n: "help" }]} />
        </div>
        <div className="flex flex-1">
          <ModelTree />
          <Sash />
          <Viewport />
          <SideTools />
        </div>
        <Messages />
        <StatusBar />
      </div>
      <Taskbar />
    </div>
  );
};

export default App;
